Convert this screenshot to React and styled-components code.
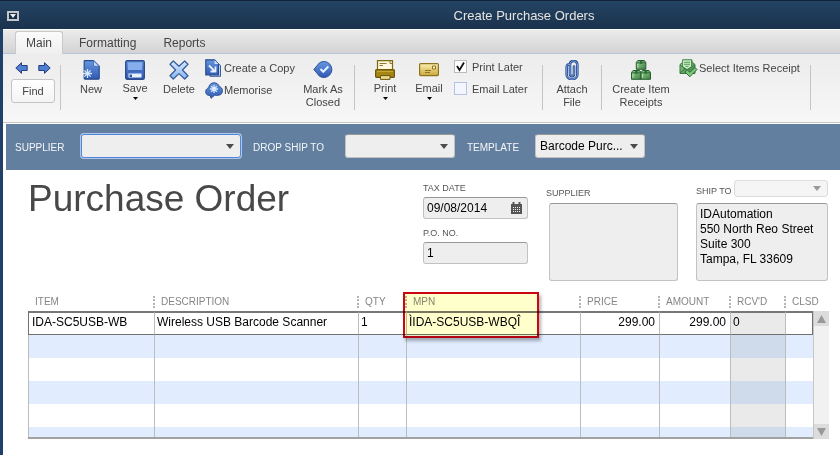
import React from "react";
import styled, { createGlobalStyle, css } from "styled-components";

const GlobalStyle = createGlobalStyle`
  * { box-sizing: border-box; }
  body { margin: 0; background: #fff; }
  body, button, input, select, textarea {
    font-family: "Liberation Sans", Arial, sans-serif;
    font-size: 12px;
    color: #000;
  }
`;

const Window = styled.div`
  display: flex;
  flex-direction: column;
  min-height: 100vh;
  background: #fff;
`;

const TitleBar = styled.header`
  display: flex;
  align-items: center;
  height: 29px;
  padding: 2px 7px 0;
  border-top: 1px solid #12233a;
  background: linear-gradient(#244464, #1a324d);
`;

const WindowMenu = styled.button`
  display: flex;
  padding: 0;
  border: 0;
  background: none;
`;

const WindowTitle = styled.h1`
  flex: 1;
  margin: 0;
  padding-left: 196px;
  font-size: 13px;
  font-weight: 400;
  line-height: 16px;
  text-align: center;
  color: #e6e4e0;
`;

const Content = styled.main`
  flex: 1;
  border-left: 3px solid #20406a;
  background: #fff;
`;

const Tabs = styled.nav`
  display: flex;
  align-items: flex-end;
  gap: 5px;
  height: 25px;
  padding-left: 12px;
  border-top: 1px solid #fff;
  border-bottom: 1px solid #b6c6da;
  background: linear-gradient(#ebebeb, #d3d3d3);
`;

const Tab = styled.button`
  height: 23px;
  margin-bottom: -1px;
  padding: 0 10px;
  border: 1px solid transparent;
  border-bottom: 0;
  border-radius: 3px 3px 0 0;
  background: none;
  color: #444;
  ${(p) => p.$active && css`
    border-color: #c9c9c9;
    background: linear-gradient(#fbfbfb, #efefef);
  `}
`;

const Toolbar = styled.div`
  display: flex;
  align-items: flex-start;
  height: 69px;
  padding: 5px 8px 0;
  border-bottom: 1px solid #c6c6c6;
  background: linear-gradient(#ececec, #f7f7f7);
`;

const FindGroup = styled.div`
  flex: none;
  width: 44px;
`;

const ArrowPair = styled.div`
  display: flex;
  justify-content: space-between;
  padding: 3px 4px 5px;
`;

const IconButton = styled.button`
  display: flex;
  padding: 0;
  border: 0;
  background: none;
`;

const FindButton = styled.button`
  width: 100%;
  height: 24px;
  padding: 0;
  border: 1px solid #c4c4c4;
  border-radius: 3px;
  background: linear-gradient(#fff, #f4f4f4);
  font-size: 11px;
  color: #444;
`;

const Separator = styled.div`
  flex: none;
  width: 1px;
  height: 45px;
  margin: 6px 8px 0;
  background: #c4c4c4;
  ${FindGroup} + & { margin-left: 5px; }
`;

const Tool = styled.button`
  display: flex;
  flex: none;
  flex-direction: column;
  align-items: center;
  gap: ${(p) => (p.$menu ? 2 : 3)}px;
  width: ${(p) => p.$width || 44}px;
  padding: 1px 0 0;
  border: 0;
  background: none;
  font-size: 11px;
  line-height: 13px;
  color: #444;
  white-space: nowrap;
`;

const Stack = styled.div`
  display: flex;
  flex: none;
  flex-direction: column;
  gap: ${(p) => p.$gap || 4}px;
  width: ${(p) => p.$width}px;
  padding: ${(p) => p.$pad};
`;

const InlineTool = styled.button`
  display: flex;
  align-items: center;
  gap: 1px;
  height: 18px;
  padding: 0;
  border: 0;
  background: none;
  font-size: 11px;
  color: #444;
  white-space: nowrap;
`;

const CheckLabel = styled.label`
  display: flex;
  align-items: center;
  gap: 5px;
  height: 13px;
  font-size: 11px;
  line-height: 12px;
  color: #444;
`;

const CheckBox = styled.input`
  appearance: none;
  width: 13px;
  height: 13px;
  margin: 0;
  border: 1px solid #b4c2e4;
  background: #f4f6ff;
  &:checked {
    border-color: #bbb;
    background: #fff url("data:image/svg+xml,%3Csvg xmlns='http://www.w3.org/2000/svg' viewBox='0 0 11 11'%3E%3Cpath d='M2 5l2.5 4L9 1.5' fill='none' stroke='%23111' stroke-width='1.8'/%3E%3C/svg%3E");
  }
`;

const FilterBar = styled.section`
  display: flex;
  align-items: center;
  height: 46px;
  margin: 1px 0 0 3px;
  padding: 0 9px 2px;
  background: #637f9f;
`;

const FilterLabel = styled.label`
  flex: none;
  width: ${(p) => p.$width}px;
  padding-top: 2px;
  font-size: 10px;
  color: #f4f6f8;
`;

const SelectBox = styled.div`
  display: grid;
  flex: none;
  align-items: center;
  width: ${(p) => p.$width}px;
  height: ${(p) => (p.$small ? 17 : 24)}px;
  margin-right: ${(p) => (p.$small ? 0 : 12)}px;
  & > * { grid-area: 1 / 1; }
  & > svg { justify-self: end; margin-right: 7px; pointer-events: none; }
`;

const fieldSkin = css`
  border: 1px solid #c2c2c2;
  border-top-color: #989898;
  border-radius: 3px;
  outline: 0;
  background: #eee;
`;

const Select = styled.select`
  appearance: none;
  width: 100%;
  height: 100%;
  padding: 0 22px 0 4px;
  ${fieldSkin}
  ${(p) => p.$focused && css`
    border: 1px solid #4f86dc;
    box-shadow: 0 0 0 1px #b0c7ec;
  `}
  ${(p) => p.$faded && css`
    border-color: #dcdcdc;
    background: #f5f5f5;
  `}
`;

const OrderHead = styled.section`
  display: flex;
  align-items: flex-start;
  padding: 10px 12px 0 25px;
`;

const OrderTitle = styled.h2`
  flex: 1;
  margin: 0;
  font-size: 37px;
  font-weight: 400;
  line-height: 37px;
  color: #484848;
  white-space: nowrap;
`;

const Fields = styled.div`
  flex: none;
  width: 105px;
  margin: 3px 18px 0 0;
`;

const SmallLabel = styled.label`
  display: block;
  font-size: 9px;
  line-height: 11px;
  color: #555;
`;

const Field = styled.div`
  display: flex;
  align-items: center;
  height: 22px;
  margin: 3px 0 9px;
  padding: 0 5px 0 3px;
  ${fieldSkin}
`;

const FieldInput = styled.input`
  flex: 1;
  min-width: 0;
  padding: 0;
  border: 0;
  outline: 0;
  background: none;
`;

const AddressBlock = styled.div`
  flex: none;
  width: ${(p) => p.$width}px;
  margin-right: ${(p) => p.$gap || 0}px;
`;

const AddressHead = styled.div`
  display: flex;
  align-items: ${(p) => (p.$withSelect ? "flex-end" : "center")};
  justify-content: space-between;
  height: ${(p) => (p.$withSelect ? 17 : 23)}px;
  margin-bottom: ${(p) => (p.$withSelect ? 6 : 0)}px;
  padding-top: ${(p) => (p.$withSelect ? 0 : 4)}px;
`;

const AddressBody = styled.div`
  padding-left: ${(p) => (p.$indent ? 3 : 0)}px;
`;

const Address = styled.textarea`
  display: block;
  width: 100%;
  height: 78px;
  padding: 3px;
  line-height: 15px;
  resize: none;
  ${fieldSkin}
`;

const Lines = styled.section`
  display: flex;
  margin: 12px 11px 0 25px;
`;

const TableFrame = styled.div`
  flex: 1;
  min-width: 0;
  border-bottom: 2px solid #a2a2a2;
`;

const Table = styled.table`
  width: 100%;
  table-layout: fixed;
  border-collapse: separate;
  border-spacing: 0;
`;

const HeadCell = styled.th`
  position: relative;
  height: 18px;
  padding: 0;
  font-size: 10px;
  font-weight: 400;
  line-height: 12px;
  text-align: left;
  color: #858585;
  white-space: nowrap;
`;

const HeadText = styled.span`
  display: block;
  margin-left: -1px;
  padding-left: 6px;
  border-left: 2px dotted ${(p) => (p.$first ? "transparent" : "#b4b4b4")};
`;

const Highlight = styled.span`
  position: absolute;
  top: -1px;
  left: -3px;
  width: 136px;
  height: 46px;
  border: 2px solid #cc0610;
  background: #ffffcb;
  box-shadow: 2px 3px 3px #b4b4b4;
  mix-blend-mode: multiply;
  pointer-events: none;
`;

const Row = styled.tr`
  height: ${(p) => p.$height || 23}px;
  background: ${(p) => (p.$tinted ? "#e1edff" : "#fff")};
`;

const Cell = styled.td`
  padding: 0 4px 0 2px;
  border-left: 1px solid #bcbcbc;
  line-height: 14px;
  text-align: ${(p) => (p.$right ? "right" : "left")};
  white-space: nowrap;
  &:first-child { padding-left: 3px; }
  ${(p) => p.$shaded && css`background: rgba(90, 90, 90, 0.13);`}
  ${(p) => p.$current && css`
    padding-bottom: 3px;
    border-top: 2px solid #777;
    border-bottom: 1px solid #707070;
    &:first-child { border-left-color: #707070; }
    &:last-child { border-right: 1px solid #707070; }
  `}
`;

const ScrollBar = styled.div`
  display: flex;
  flex: none;
  flex-direction: column;
  justify-content: space-between;
  width: 16px;
  margin-top: 18px;
  border-left: 1px solid #c6c6c6;
  background: #f1f1f1;
`;

const ScrollButton = styled.button`
  display: flex;
  align-items: center;
  justify-content: center;
  height: 15px;
  padding: 0;
  border: 0;
  background: #dcdcdc;
`;

const HiddenDefs = styled.svg`
  position: absolute;
`;

const Svg = ({ w = 20, h = 20, children }) => (
  <svg width={w} height={h} viewBox={`0 0 ${w} ${h}`} aria-hidden="true">{children}</svg>
);

const Gradients = () => (
  <HiddenDefs width="0" height="0" aria-hidden="true">
    <defs>
      <linearGradient id="blue" x2="0" y2="1"><stop stopColor="#6797df" /><stop offset="1" stopColor="#3159b4" /></linearGradient>
      <linearGradient id="pale" x2="0" y2="1"><stop stopColor="#d9eaff" /><stop offset="1" stopColor="#86b5f0" /></linearGradient>
      <linearGradient id="gold" x2="0" y2="1"><stop stopColor="#fff0b2" /><stop offset="1" stopColor="#c9a83a" /></linearGradient>
      <linearGradient id="green" x2="1" y2="1"><stop stopColor="#98d193" /><stop offset="1" stopColor="#3c8142" /></linearGradient>
    </defs>
  </HiddenDefs>
);

const Triangle = ({ w = 8, h = 5, color = "#4c4c4c", up }) => (
  <Svg w={w} h={h}><path d={up ? `M0 ${h}H${w}L${w / 2} 0z` : `M0 0H${w}L${w / 2} ${h}z`} fill={color} /></Svg>
);

const MenuBoxIcon = () => (
  <Svg w={12} h={10}>
    <rect x="1" y="1" width="10" height="8" fill="#172c45" stroke="#c3c7cb" strokeWidth="2" />
    <path d="M3 3h6L6 7z" fill="#f0f0f0" />
  </Svg>
);

const ArrowIcon = ({ right }) => (
  <Svg w={13} h={12}>
    <path transform={right ? "matrix(-1 0 0 1 13 0)" : undefined}
      d="M.8 6L6.5.7v2.8h5.7v5H6.5v2.8z" fill="#4f7fd2" stroke="#253f79" />
  </Svg>
);

const Burst = ({ x, y, r = 4 }) => (
  <g transform={`translate(${x} ${y})`} stroke="#d5e9ff" strokeWidth="1.3">
    <path d={`M0 ${-r}V${r}M${-r} 0H${r}M${-r * 0.7} ${-r * 0.7}L${r * 0.7} ${r * 0.7}M${r * 0.7} ${-r * 0.7}L${-r * 0.7} ${r * 0.7}`} />
  </g>
);

const NewIcon = () => (
  <Svg w={17}>
    <path d="M1.5.7h9l5.7 5.6v11.9q0 1-1 1h-13q-1 0-1-1V1.7q0-1 .3-1z" fill="url(#blue)" stroke="#294b8c" strokeWidth="1.2" />
    <path d="M10.5.7v5.6h5.7z" fill="#c3ddff" stroke="#4a73b9" />
    <Burst x={4.5} y={13.5} r={4.5} />
  </Svg>
);

const SaveIcon = () => (
  <Svg>
    <rect x=".7" y=".7" width="18.6" height="18.6" rx="1.5" fill="url(#blue)" stroke="#2c4c8d" strokeWidth="1.4" />
    <path d="M3 2.500h14v8H3z" fill="#86aeed" />
    <path d="M3 10.8h14" stroke="#3158a8" />
    <path d="M3.500 13.500h13v4h-13z" fill="#e7f2ff" />
    <path d="M4.500 14.500h2.500v2.500H4.500z" fill="#34599f" />
  </Svg>
);

const DeleteIcon = () => (
  <Svg>
    <path d="M4.3 1L10 6.2 15.7 1 19 4.2 13.4 10l5.6 5.8-3.3 3.2L10 13.6 4.3 19 1 15.8 6.6 10 1 4.2z"
      fill="url(#pale)" stroke="#395d9e" strokeWidth="1.3" strokeLinejoin="round" />
  </Svg>
);

const CopyIcon = () => (
  <Svg w={18} h={18}>
    <path d="M5 4.500h8l2.500 2v10.800H5z" fill="#cfe0fa" stroke="#365a9c" />
    <path d="M.8.8h8.700l4 4.200v10.800H.8z" fill="url(#blue)" stroke="#294b8c" strokeWidth="1.200" />
    <path d="M9.500 1v4h4z" fill="#c7deff" />
    <path d="M4 6.500l5.500 5.500M10.500 7.500v5h-5" fill="none" stroke="#e3f0ff" strokeWidth="1.800" />
  </Svg>
);

const MemoriseIcon = () => (
  <Svg w={18} h={17}>
    <path d="M5.2 13.4C2.2 13.8.6 12 .7 9.6c0-1.900 1.200-3.400 3-3.700C4 3 6 .8 9 .8c2.600 0 4.600 1.400 5.200 3.800 2 .3 3.200 2 3.200 4.200 0 2.600-1.400 4.200-4 4.500H9.500L6 16.300z" fill="url(#blue)" stroke="#2f5092" />
    <Burst x={9} y={7} r={4} />
  </Svg>
);

const ClosedIcon = () => (
  <Svg>
    <path d="M.8 9.500L6.500 2.800A8 8 0 1 1 6.500 16.200z" fill="url(#blue)" stroke="#31549a" strokeLinejoin="round" />
    <path d="M7.500 9l2.800 2.800 5-5.300" fill="none" stroke="#e6f1ff" strokeWidth="2" />
  </Svg>
);

const PrintIcon = () => (
  <Svg>
    <path d="M2.500.7h15V10h-15z" fill="#fff8dc" stroke="#7c6712" strokeWidth="1.200" />
    <path d="M4.500 3.500h7M4.500 5.500h3.500" stroke="#8d7a2d" />
    <path d="M15 1v2.500h2" stroke="#8d7a2d" fill="none" />
    <rect x=".6" y="9.600" width="18.800" height="7.800" rx="1" fill="#a58612" stroke="#6d580a" strokeWidth="1.200" />
    <path d="M2 11.500h16" stroke="#c4a73a" />
    <path d="M5.500 15.600h9.500v3.800H5.500z" fill="#e9d994" stroke="#6d580a" />
  </Svg>
);

const EmailIcon = () => (
  <Svg>
    <rect x=".6" y="3.600" width="18.800" height="12" rx="1" fill="url(#gold)" stroke="#8f7420" strokeWidth="1.200" />
    <path d="M13.500 6h3v3h-3z" fill="#fff5c8" stroke="#8f7420" />
    <path d="M6 10.500h6M6 12.500h5" stroke="#92762a" />
  </Svg>
);

const clipPath = "M12.300 4.500v10.200c0 6-10.600 6-10.600 0V7c0-2.600 2-3.200 3.200-2.500M5 14V4.500c0-4.700 7.300-4.700 7.300 0M5 14c0 2.800 4 2.800 4 0V6.500";

const ClipIcon = () => (
  <Svg w={14}>
    <g fill="none" strokeLinecap="round">
      <path d={clipPath} stroke="#284a8c" strokeWidth="2.600" />
      <path d={clipPath} stroke="#7ba5ea" strokeWidth="1" />
    </g>
  </Svg>
);

const Crate = ({ x, y }) => (
  <g transform={`translate(${x} ${y})`}>
    <path d="M.5 2.500L2 .5h6.500L10 2.500v6.800H.5z" fill="url(#green)" stroke="#285d31" />
    <path d="M.5 2.800H10" stroke="#326e38" />
    <path d="M4 .8h2.500v3H4z" fill="#2f6d37" />
    <path d="M2 4v3.500" stroke="#b7e2b1" />
  </g>
);

const CratesIcon = () => (
  <Svg><Crate x={4.8} y={0} /><Crate x={0} y={10} /><Crate x={9.500} y={10} /></Svg>
);

const ReceiptIcon = () => (
  <Svg w={19} h={19}>
    <path d="M1 5.500L4 3V1h9v2l3 2.500v9H1z" fill="url(#green)" stroke="#397b40" />
    <path d="M3.500.8h9v7L8 10.500 3.500 7.500z" fill="#c8ebc4" stroke="#4c8d50" />
    <path d="M5 3.300h6M5 5.300h6M6.500 7.300h3" stroke="#5b9a5d" />
    <path d="M1 6l7 5.500L15.500 6M1 14l5-4" fill="none" stroke="#397b40" />
    <path d="M6 13l2.300-2 2.500 2.300L16 8.500l2 2-7.200 7.300z" fill="#7fc77c" stroke="#2e6d36" />
  </Svg>
);

const CalendarIcon = () => (
  <Svg w={11} h={12}>
    <path d="M0 2h11v10H0z" fill="#555" />
    <path d="M2.500 0v3M8.500 0v3" stroke="#555" strokeWidth="2" />
    <path d="M2 5.500h7M2 7.500h7M2 9.500h7" stroke="#eee" strokeDasharray="1 1" />
  </Svg>
);

const columns = [
  { name: "ITEM", width: 126, value: "IDA-SC5USB-WB" },
  { name: "DESCRIPTION", value: "Wireless USB Barcode Scanner" },
  { name: "QTY", width: 48, value: "1" },
  { name: "MPN", width: 174, value: "ÌIDA-SC5USB-WBQÎ", highlight: true },
  { name: "PRICE", width: 79, value: "299.00", right: true },
  { name: "AMOUNT", width: 71, value: "299.00", right: true },
  { name: "RCV'D", width: 55, value: "0", shaded: true },
  { name: "CLSD", width: 28, value: "" },
];

const emptyRows = [23, 23, 23, 23, 10];

const DropDown = ({ id, label, width, value = "", focused, small }) => (
  <SelectBox $width={width} $small={small}>
    <Select id={id} aria-label={label} defaultValue={value} $focused={focused} $faded={small}>
      <option>{value}</option>
    </Select>
    <Triangle color={small ? "#999" : undefined} />
  </SelectBox>
);

const MenuCaret = () => <Triangle w={5} h={3} color="#000" />;

export default function App() {
  return (
    <Window>
      <GlobalStyle />
      <Gradients />
      <TitleBar>
        <WindowMenu aria-label="Window menu"><MenuBoxIcon /></WindowMenu>
        <WindowTitle>Create Purchase Orders</WindowTitle>
      </TitleBar>
      <Content>
        <Tabs>
          <Tab $active>Main</Tab>
          <Tab>Formatting</Tab>
          <Tab>Reports</Tab>
        </Tabs>
        <Toolbar>
          <FindGroup>
            <ArrowPair>
              <IconButton aria-label="Previous"><ArrowIcon /></IconButton>
              <IconButton aria-label="Next"><ArrowIcon right /></IconButton>
            </ArrowPair>
            <FindButton>Find</FindButton>
          </FindGroup>
          <Separator />
          <Tool><NewIcon />New</Tool>
          <Tool $menu><SaveIcon />Save<MenuCaret /></Tool>
          <Tool><DeleteIcon />Delete</Tool>
          <Stack $width={99} $pad="0 0 0 4px">
            <InlineTool><CopyIcon />Create a Copy</InlineTool>
            <InlineTool><MemoriseIcon />Memorise</InlineTool>
          </Stack>
          <Tool $width={46}><ClosedIcon />Mark As<br />Closed</Tool>
          <Separator />
          <Tool $menu><PrintIcon />Print<MenuCaret /></Tool>
          <Tool $menu><EmailIcon />Email<MenuCaret /></Tool>
          <Stack $width={83} $gap={9} $pad="1px 0 0 3px">
            <CheckLabel><CheckBox type="checkbox" defaultChecked />Print Later</CheckLabel>
            <CheckLabel><CheckBox type="checkbox" />Email Later</CheckLabel>
          </Stack>
          <Separator />
          <Tool $width={42}><ClipIcon />Attach<br />File</Tool>
          <Separator />
          <Tool $width={62}><CratesIcon />Create Item<br />Receipts</Tool>
          <Stack $width={130} $pad="0 0 0 7px">
            <InlineTool><ReceiptIcon />Select Items Receipt</InlineTool>
          </Stack>
          <Separator />
        </Toolbar>
        <FilterBar>
          <FilterLabel htmlFor="supplier" $width={66}>SUPPLIER</FilterLabel>
          <DropDown id="supplier" width={160} focused />
          <FilterLabel htmlFor="drop" $width={92}>DROP SHIP TO</FilterLabel>
          <DropDown id="drop" width={110} />
          <FilterLabel htmlFor="template" $width={68}>TEMPLATE</FilterLabel>
          <DropDown id="template" width={110} value="Barcode Purc..." />
        </FilterBar>
        <OrderHead>
          <OrderTitle>Purchase Order</OrderTitle>
          <Fields>
            <SmallLabel htmlFor="date">TAX DATE</SmallLabel>
            <Field>
              <FieldInput id="date" defaultValue="09/08/2014" />
              <IconButton aria-label="Choose date"><CalendarIcon /></IconButton>
            </Field>
            <SmallLabel htmlFor="number">P.O. NO.</SmallLabel>
            <Field><FieldInput id="number" defaultValue="1" /></Field>
          </Fields>
          <AddressBlock $width={132} $gap={18}>
            <AddressHead><SmallLabel htmlFor="vendor">SUPPLIER</SmallLabel></AddressHead>
            <AddressBody $indent><Address id="vendor" /></AddressBody>
          </AddressBlock>
          <AddressBlock $width={132}>
            <AddressHead $withSelect>
              <SmallLabel htmlFor="shipto">SHIP TO</SmallLabel>
              <DropDown label="Ship to name" width={94} small />
            </AddressHead>
            <AddressBody>
              <Address id="shipto" spellCheck={false}
                defaultValue={"IDAutomation\n550 North Reo Street\nSuite 300\nTampa, FL 33609"} />
            </AddressBody>
          </AddressBlock>
        </OrderHead>
        <Lines>
          <TableFrame>
            <Table>
              <colgroup>
                {columns.map((c) => <col key={c.name} width={c.width} />)}
              </colgroup>
              <thead>
                <tr>
                  {columns.map((c, i) => (
                    <HeadCell key={c.name}>
                      <HeadText $first={i === 0}>{c.name}</HeadText>
                      {c.highlight && <Highlight />}
                    </HeadCell>
                  ))}
                </tr>
              </thead>
              <tbody>
                <Row $height={24}>
                  {columns.map((c) => (
                    <Cell key={c.name} $right={c.right} $shaded={c.shaded} $current>{c.value}</Cell>
                  ))}
                </Row>
                {emptyRows.map((height, i) => (
                  <Row key={i} $height={height} $tinted={i % 2 === 0}>
                    {columns.map((c) => <Cell key={c.name} $shaded={c.shaded} />)}
                  </Row>
                ))}
              </tbody>
            </Table>
          </TableFrame>
          <ScrollBar>
            <ScrollButton aria-label="Scroll up"><Triangle w={9} h={8} color="#999" up /></ScrollButton>
            <ScrollButton aria-label="Scroll down"><Triangle w={9} h={8} color="#999" /></ScrollButton>
          </ScrollBar>
        </Lines>
      </Content>
    </Window>
  );
}
